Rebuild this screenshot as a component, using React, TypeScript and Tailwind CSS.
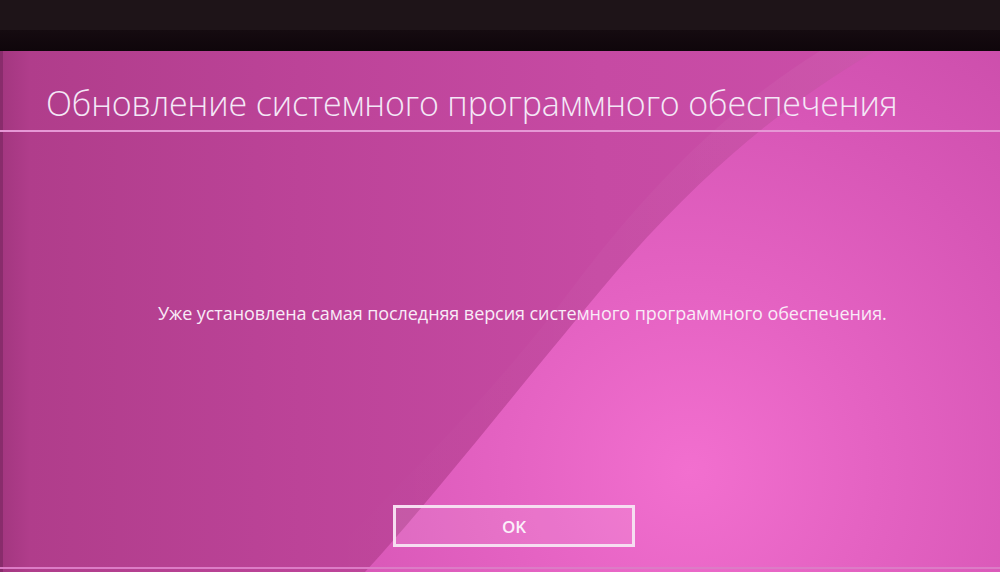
import React from "react";

// Wavy PS4-style backdrop drawn behind the dialog content
function WaveBackdrop() {
  return (
    <svg
      className="absolute inset-0 h-full w-full"
      viewBox="0 0 1000 521"
      preserveAspectRatio="none"
    >
      <defs>
        <linearGradient id="base" x1="0" y1="0" x2="1" y2="0">
          <stop offset="0" stopColor="#a2367f" />
          <stop offset="0.03" stopColor="#b03d8b" />
          <stop offset="0.3" stopColor="#bc4398" />
          <stop offset="0.6" stopColor="#c64aa3" />
          <stop offset="1" stopColor="#cc4faa" />
        </linearGradient>
        <radialGradient
          id="glow"
          cx="690"
          cy="420"
          r="540"
          gradientUnits="userSpaceOnUse"
        >
          <stop offset="0" stopColor="#f26fcf" />
          <stop offset="0.35" stopColor="#e462c2" />
          <stop offset="0.7" stopColor="#d756b6" />
          <stop offset="1" stopColor="#cc4eab" />
        </radialGradient>
        <linearGradient id="band" x1="0" y1="0" x2="1" y2="0">
          <stop offset="0" stopColor="#ffffff" stopOpacity="0" />
          <stop offset="1" stopColor="#ffffff" stopOpacity="0.045" />
        </linearGradient>
      </defs>
      <rect x="0" y="0" width="1000" height="521" fill="url(#base)" />
      {/* faint ribbon ahead of the main curve */}
      <path
        d="M 820 0 C 740 50, 660 120, 570 240 S 390 440, 315 521 L 365 521 C 430 450, 505 360, 600 240 C 700 120, 790 50, 875 0 Z"
        fill="url(#band)"
      />
      {/* main lighter sweep */}
      <path
        d="M 875 0 C 790 50, 700 120, 600 240 S 430 450, 365 521 L 1000 521 L 1000 0 Z"
        fill="url(#glow)"
      />
      {/* left edge falloff */}
      <rect x="0" y="0" width="3" height="521" fill="#5a1a47" opacity="0.35" />
    </svg>
  );
}

export default function App() {
  return (
    <div
      className="flex h-[572px] w-[1000px] flex-col overflow-hidden bg-[#140a0f]"
      style={{ fontFamily: '"Open Sans", "Noto Sans", sans-serif' }}
    >
      {/* TV bezel above the picture */}
      <div className="flex h-[51px] flex-col">
        <div className="h-[30px] bg-[#1e1418]" />
        <div className="flex-1 bg-gradient-to-b from-[#150b10] to-[#0f060b]" />
      </div>

      {/* screen */}
      <div className="relative flex-1 overflow-hidden">
        <WaveBackdrop />
        <div className="relative flex flex-col">
          <h1 className="pl-[46px] pt-[35px] text-[34px] font-light leading-[34px] tracking-[-0.15px] text-[#f4e8f7]">
            Обновление системного программного обеспечения
          </h1>
          <div className="mt-[10px] h-[2px] bg-[#e698d6]" />

          <p className="mt-[172px] pl-[158px] text-[18px] leading-[18px] tracking-[-0.07px] text-[#f9ebf7]">
            Уже установлена самая последняя версия системного программного
            обеспечения.
          </p>

          <div className="ml-[393px] mt-[183px] flex h-[42px] w-[242px] items-center justify-center border-[3px] border-[#f6def1] bg-white/10">
            <span className="text-[17px] font-semibold leading-none text-[#fbf0fa]">
              OK
            </span>
          </div>

          <div className="mt-[20px] h-[2px] bg-[#dc7cc6]" />
        </div>
      </div>
    </div>
  );
}
